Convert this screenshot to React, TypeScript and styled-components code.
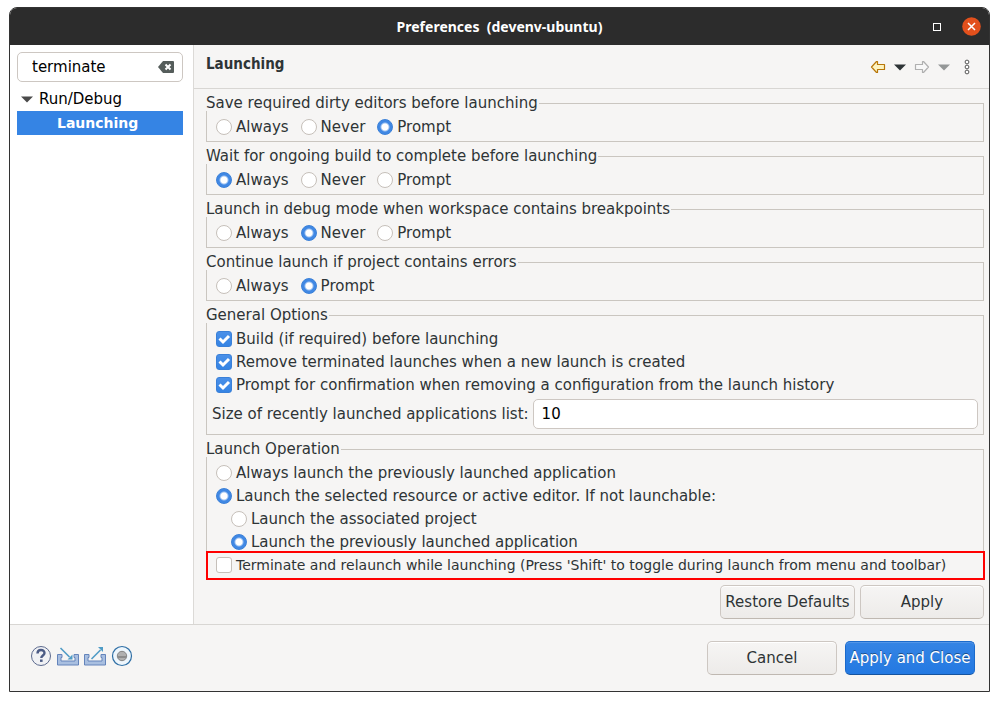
import React from "react";
import styled, { createGlobalStyle, css } from "styled-components";

const GlobalStyle = createGlobalStyle`
  *, *::before, *::after { box-sizing: border-box; }
  body {
    margin: 0;
    background: #fff;
    color: #2e3436;
    font: 15px/23px "DejaVu Sans", sans-serif;
  }
  input, button { font: inherit; color: inherit; }
`;

const Page = styled.div`
  min-height: 100vh;
  padding: 7px 9px 9px;
  display: flex;
`;

const Window = styled.div`
  flex: 1;
  min-width: 0;
  display: flex;
  flex-direction: column;
  border: 1px solid #333;
  border-radius: 8px 8px 0 0;
  background: #f6f5f4;
`;

const TitleBar = styled.header`
  display: grid;
  grid-template-columns: 1fr auto 1fr;
  align-items: center;
  height: 37px;
  padding: 0 8px;
  border-radius: 7px 7px 0 0;
  background: #2c2c2c;
`;

const WindowTitle = styled.h1`
  grid-column: 2;
  margin: 0;
  color: #fff;
  font: bold 14px/21px "Noto Sans", sans-serif;
  white-space: pre;
`;

const WindowControls = styled.div`
  display: flex;
  justify-content: flex-end;
  align-items: center;
  gap: 18px;
`;

const IconButton = styled.button`
  display: flex;
  padding: 0;
  border: 0;
  background: none;
`;

const Body = styled.div`
  flex: 1;
  display: flex;
`;

const Sidebar = styled.nav`
  width: 184px;
  flex: none;
  padding: 7px 10px 0 7px;
  background: #fff;
  border-right: 1px solid #dcdad7;
`;

const SearchBox = styled.div`
  display: flex;
  align-items: center;
  height: 30px;
  padding: 0 8px 0 14px;
  border: 1px solid #cdc7c2;
  border-radius: 5px;
  background: #fff;
  color: #000;
`;

const SearchInput = styled.input`
  flex: 1;
  min-width: 0;
  padding: 0;
  border: 0;
  outline: 0;
  background: none;
`;

const Tree = styled.ul`
  list-style: none;
  margin: 5px 0 0;
  padding: 0;
  color: #000;
`;

const TreeItem = styled.li<{ $selected?: boolean }>`
  display: flex;
  align-items: center;
  gap: 6px;
  height: 24px;
  padding-left: 4px;
  ${(p) =>
    p.$selected &&
    css`
      padding-left: 40px;
      background: #3584e4;
      color: #fff;
      font-weight: bold;
      font-size: 14px;
    `}
`;

const Main = styled.main`
  flex: 1;
  min-width: 0;
  display: flex;
  flex-direction: column;
`;

const PageHeader = styled.div`
  display: flex;
  justify-content: space-between;
  height: 44px;
  padding: 7px 13px 0 12px;
  border-bottom: 1px solid #d8d6d3;
`;

const PageTitle = styled.h2`
  margin: 0;
  font: bold 15px/24px "DejaVu Sans Condensed", "DejaVu Sans", sans-serif;
`;

const Tools = styled.div`
  display: flex;
  align-items: center;
  gap: 8px;
  padding-bottom: 6px;
`;

const Form = styled.form`
  display: flex;
  flex-direction: column;
  gap: 6px;
  padding: 6px 5px 5px 12px;
`;

const Group = styled.fieldset<{ $flush?: boolean }>`
  min-width: 0;
  margin: 0;
  padding: 5px 5px ${(p) => (p.$flush ? 1 : 2)}px;
  border: 1px solid #cac6c0;
`;

const Legend = styled.legend`
  margin-left: -6px;
  padding: 0 1px 0 0;
  background: #f6f5f4;
  line-height: 16px;
`;

const ChoiceRow = styled.div`
  display: flex;
  gap: 12px;
`;

const Choice = styled.label<{ $nested?: boolean }>`
  display: flex;
  align-items: center;
  gap: 4px;
  height: 23px;
  padding-left: ${(p) => (p.$nested ? 19 : 4)}px;
  white-space: nowrap;

  ${ChoiceRow} & + & {
    padding-left: 0;
  }
`;

const Mark = styled.input`
  appearance: none;
  flex: none;
  width: 16px;
  height: 16px;
  margin: 0 0 1px;
  border: 1px solid #c6c0ba;
  background: #fff;
`;

const Radio = styled(Mark)`
  border-radius: 50%;
  &:checked {
    border-color: #3a80d8;
    background: radial-gradient(circle, #fff 3px, #4088e4 5px);
  }
`;

const CheckBox = styled(Mark)`
  border-radius: 3px;
  &:checked {
    border-color: #3a80d8;
    background: linear-gradient(#4a90e8, #3584e4);
  }
`;

const CheckSlot = styled.span`
  display: grid;
  & > * {
    grid-area: 1 / 1;
  }
  svg {
    pointer-events: none;
  }
`;

const Highlighted = styled.div`
  position: relative;
  margin: 0 -4px 0 -3px;
  padding-left: 3px;
  outline: 2px solid #f00;
  outline-offset: 1px;
  background: #f6f5f4;
  font-size: 14px;
`;

const SizeField = styled.label`
  display: flex;
  align-items: center;
  gap: 4px;
  margin: 2px 0 3px;
  white-space: nowrap;
`;

const SizeInput = styled.input`
  flex: 1;
  min-width: 0;
  height: 30px;
  padding: 0 8px;
  border: 1px solid #cdc7c2;
  border-radius: 5px;
  background: #fff;
  color: #000;
`;

const Actions = styled.div<{ $gap: number }>`
  display: flex;
  justify-content: flex-end;
  gap: ${(p) => p.$gap}px;
`;

const Button = styled.button<{ $width: number; $primary?: boolean }>`
  min-width: ${(p) => p.$width}px;
  height: 34px;
  padding: 0 3px;
  border: 1px solid #cdc7c2;
  border-bottom-color: #bfb8b1;
  border-radius: 5px;
  background: linear-gradient(#f6f5f4, #edebe9);
  box-shadow: inset 0 1px #fff;
  white-space: nowrap;
  ${(p) =>
    p.$primary &&
    css`
      border-color: #1b6acb;
      border-bottom-color: #15539e;
      background: linear-gradient(#3584e4, #2379e2);
      box-shadow: inset 0 1px #5396e8;
      color: #fff;
      text-shadow: 0 -1px rgba(0, 0, 0, 0.4);
    `}
`;

const Footer = styled.footer`
  display: flex;
  justify-content: space-between;
  align-items: center;
  height: 67px;
  padding: 0 14px 0 20px;
  border-top: 1px solid #d8d6d3;
`;

const FooterIcons = styled.div`
  display: flex;
  gap: 5px;
  padding-bottom: 4px;
`;

const Triangle = ({ color }: { color: string }) => (
  <svg width="12" height="7" viewBox="0 0 12 7">
    <path d="M0 0.5h12L6 6.5z" fill={color} />
  </svg>
);

const BackArrow = () => (
  <svg width="16" height="14" viewBox="0 0 16 14">
    <path d="M1.500 7l5-5.500h1v3h7v5h-7v3h-1z" fill="#fdf3c0" stroke="#b8770a" strokeWidth="1.200" strokeLinejoin="round" />
  </svg>
);

const ForwardArrow = () => (
  <svg width="16" height="14" viewBox="0 0 16 14">
    <path d="M14.500 7l-5-5.500h-1v3h-7v5h7v3h1z" fill="#f8f8f8" stroke="#b0b0b0" strokeWidth="1.200" strokeLinejoin="round" />
  </svg>
);

const Dots = () => (
  <svg width="18" height="16" viewBox="-6 0 18 16" fill="#fff" stroke="#555">
    <circle cx="3" cy="3" r="1.900" />
    <circle cx="3" cy="8" r="1.900" />
    <circle cx="3" cy="13" r="1.900" />
  </svg>
);

const ClearIcon = () => (
  <svg width="16" height="12" viewBox="0 0 16 12">
    <path d="M5 0h10a1 1 0 0 1 1 1v10a1 1 0 0 1-1 1H5L0 6z" fill="#555d5b" />
    <path d="M7.500 3.500l5 5m0-5l-5 5" stroke="#fff" strokeWidth="2" />
  </svg>
);

const Tick = () => (
  <svg width="16" height="16" viewBox="0 0 16 16">
    <path d="M3.500 7.500l3.500 3.500 6-6" fill="none" stroke="#fff" strokeWidth="3" />
  </svg>
);

const HelpIcon = () => (
  <svg width="22" height="22" viewBox="0 0 22 22">
    <circle cx="11" cy="11" r="9.500" fill="#f0f1f4" stroke="#5c6a8e" />
    <path d="M7.500 8.500c0-4.500 7-4.500 7-.5 0 2.500-3.200 2.600-3.200 5" fill="none" stroke="#4b5b85" strokeWidth="2.400" />
    <rect x="10" y="14.500" width="2.600" height="2.400" fill="#4b5b85" />
  </svg>
);

const Tray = () => (
  <path d="M.5 9.500h4.500v3h-1v3.500h14v-3.500h-1v-3h4.500v10.500h-21z" fill="#a9bfe0" stroke="#6484bb" />
);

const ImportIcon = () => (
  <svg width="22" height="22" viewBox="0 0 22 22">
    <Tray />
    <path d="M3.500 3l9 9" stroke="#4f9cc6" strokeWidth="1.600" />
    <path d="M15.500 14.500v-5l-5 5z" fill="#4f9cc6" />
  </svg>
);

const ExportIcon = () => (
  <svg width="22" height="22" viewBox="0 0 22 22">
    <Tray />
    <path d="M7.500 14l9-9" stroke="#4f9cc6" strokeWidth="1.600" />
    <path d="M19 2v5l-5-5z" fill="#4f9cc6" />
  </svg>
);

const RecordIcon = () => (
  <svg width="22" height="22" viewBox="0 0 22 22">
    <circle cx="11" cy="11" r="9.500" fill="#eef6fc" stroke="#2f6fa5" strokeWidth="1.200" />
    <circle cx="11" cy="11" r="4.700" fill="#b0b0b0" stroke="#858585" />
    <path d="M7 11h8v2H7z" fill="#8c8c8c" />
  </svg>
);

function RadioGroup({ title, options, selected }: { title: string; options: string[]; selected: string }) {
  return (
    <Group>
      <Legend>{title}</Legend>
      <ChoiceRow>
        {options.map((option) => (
          <Choice key={option}>
            <Radio type="radio" name={title} defaultChecked={option === selected} />
            {option}
          </Choice>
        ))}
      </ChoiceRow>
    </Group>
  );
}

function CheckChoice({ label, checked }: { label: string; checked?: boolean }) {
  return (
    <Choice>
      <CheckSlot>
        <CheckBox type="checkbox" defaultChecked={checked} />
        {checked && <Tick />}
      </CheckSlot>
      {label}
    </Choice>
  );
}

const three = ["Always", "Never", "Prompt"];

export default function App() {
  return (
    <Page>
      <GlobalStyle />
      <Window>
        <TitleBar>
          <WindowTitle>{"Preferences  (devenv-ubuntu)"}</WindowTitle>
          <WindowControls>
            <IconButton aria-label="Maximize">
              <svg width="14" height="14" viewBox="0 0 14 14">
                <rect x="3.500" y="3.500" width="7" height="7" fill="none" stroke="#fff" />
              </svg>
            </IconButton>
            <IconButton aria-label="Close">
              <svg width="19" height="19" viewBox="0 0 19 19">
                <circle cx="9.500" cy="9.500" r="9.300" fill="#e2501c" />
                <path d="M6 6l7 7m0-7l-7 7" stroke="#fff" strokeWidth="1.500" />
              </svg>
            </IconButton>
          </WindowControls>
        </TitleBar>
        <Body>
          <Sidebar>
            <SearchBox>
              <SearchInput aria-label="Filter" defaultValue="terminate" />
              <IconButton aria-label="Clear">
                <ClearIcon />
              </IconButton>
            </SearchBox>
            <Tree>
              <TreeItem>
                <Triangle color="#4a4a4a" />
                Run/Debug
              </TreeItem>
              <TreeItem $selected>Launching</TreeItem>
            </Tree>
          </Sidebar>
          <Main>
            <PageHeader>
              <PageTitle>Launching</PageTitle>
              <Tools>
                <IconButton aria-label="Back"><BackArrow /></IconButton>
                <IconButton aria-label="Back history"><Triangle color="#2e3436" /></IconButton>
                <IconButton aria-label="Forward"><ForwardArrow /></IconButton>
                <IconButton aria-label="Forward history"><Triangle color="#949797" /></IconButton>
                <IconButton aria-label="More"><Dots /></IconButton>
              </Tools>
            </PageHeader>
            <Form onSubmit={(e) => e.preventDefault()}>
              <RadioGroup title="Save required dirty editors before launching" options={three} selected="Prompt" />
              <RadioGroup title="Wait for ongoing build to complete before launching" options={three} selected="Always" />
              <RadioGroup title="Launch in debug mode when workspace contains breakpoints" options={three} selected="Never" />
              <RadioGroup title="Continue launch if project contains errors" options={["Always", "Prompt"]} selected="Prompt" />
              <Group>
                <Legend>General Options</Legend>
                <CheckChoice label="Build (if required) before launching" checked />
                <CheckChoice label="Remove terminated launches when a new launch is created" checked />
                <CheckChoice label="Prompt for confirmation when removing a configuration from the launch history" checked />
                <SizeField>
                  Size of recently launched applications list:
                  <SizeInput defaultValue="10" />
                </SizeField>
              </Group>
              <Group $flush>
                <Legend>Launch Operation</Legend>
                <Choice>
                  <Radio type="radio" name="operation" />
                  Always launch the previously launched application
                </Choice>
                <Choice>
                  <Radio type="radio" name="operation" defaultChecked />
                  Launch the selected resource or active editor. If not launchable:
                </Choice>
                <Choice $nested>
                  <Radio type="radio" name="fallback" />
                  <span>Launch the associated pro<u>j</u>ect</span>
                </Choice>
                <Choice $nested>
                  <Radio type="radio" name="fallback" defaultChecked />
                  Launch the previously launched application
                </Choice>
                <Highlighted>
                  <CheckChoice label="Terminate and relaunch while launching (Press 'Shift' to toggle during launch from menu and toolbar)" />
                </Highlighted>
              </Group>
              <Actions $gap={5}>
                <Button type="button" $width={135}>Restore Defaults</Button>
                <Button type="button" $width={124}>Apply</Button>
              </Actions>
            </Form>
          </Main>
        </Body>
        <Footer>
          <FooterIcons>
            <IconButton aria-label="Help"><HelpIcon /></IconButton>
            <IconButton aria-label="Import"><ImportIcon /></IconButton>
            <IconButton aria-label="Export"><ExportIcon /></IconButton>
            <IconButton aria-label="Record"><RecordIcon /></IconButton>
          </FooterIcons>
          <Actions $gap={8}>
            <Button $width={130}>Cancel</Button>
            <Button $width={130} $primary>Apply and Close</Button>
          </Actions>
        </Footer>
      </Window>
    </Page>
  );
}
